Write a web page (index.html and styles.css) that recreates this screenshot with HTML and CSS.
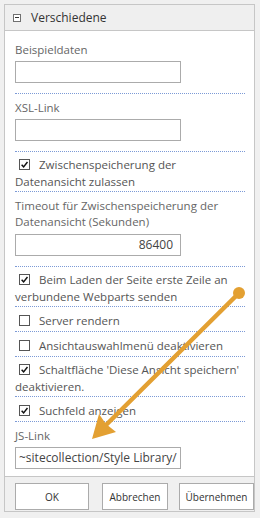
FILE: index.html
```html
<!DOCTYPE html>
<html lang="de">

    <head>
        <meta charset="UTF-8">
        <meta name="viewport" content="width=device-width, initial-scale=1.0">
        <title>Verschiedene</title>
        <link rel="stylesheet" href="styles.css">
    </head>

    <body>
        <div class="page">
            <div class="panel">
                <div class="section-head">
                    <span class="toggle"></span>
                    <span class="section-title">Verschiedene</span>
                </div>

                <div class="field first">
                    <div class="label">Beispieldaten</div>
                    <div class="textbox"></div>
                </div>

                <div class="field">
                    <div class="label">XSL-Link</div>
                    <div class="textbox"></div>
                </div>

                <div class="check-row">
                    <span class="box checked"><svg viewBox="0 0 10 10"><path d="M1.8 5.2 L4 7.6 L8.3 2.2"/></svg></span>Zwischenspeicherung der<br>Datenansicht zulassen
                </div>

                <div class="field">
                    <div class="label">Timeout für Zwischenspeicherung der<br>Datenansicht (Sekunden)</div>
                    <div class="textbox number">86400</div>
                </div>

                <div class="check-row">
                    <span class="box checked"><svg viewBox="0 0 10 10"><path d="M1.8 5.2 L4 7.6 L8.3 2.2"/></svg></span>Beim Laden der Seite erste Zeile an<br>verbundene Webparts senden
                </div>

                <div class="check-row single">
                    <span class="box"></span>Server rendern
                </div>

                <div class="check-row single">
                    <span class="box"></span>Ansichtauswahlmenü deaktivieren
                </div>

                <div class="check-row">
                    <span class="box checked"><svg viewBox="0 0 10 10"><path d="M1.8 5.2 L4 7.6 L8.3 2.2"/></svg></span>Schaltfläche 'Diese Ansicht speichern'<br>deaktivieren.
                </div>

                <div class="check-row single">
                    <span class="box checked"><svg viewBox="0 0 10 10"><path d="M1.8 5.2 L4 7.6 L8.3 2.2"/></svg></span>Suchfeld anzeigen
                </div>

                <div class="field last">
                    <div class="label">JS-Link</div>
                    <div class="textbox value">~sitecollection/Style Library/</div>
                </div>

                <div class="buttons">
                    <button class="btn btn-ok">OK</button>
                    <button class="btn btn-cancel">Abbrechen</button>
                    <button class="btn btn-apply">Übernehmen</button>
                </div>
            </div>
        </div>

        <!-- callout arrow drawn over the panel -->
        <svg class="callout" width="260" height="518" viewBox="0 0 260 518">
            <line x1="239" y1="293" x2="104" y2="427" />
            <circle cx="239" cy="293" r="6" />
            <polygon points="92,439 99,414 106,424 116,432" />
        </svg>
    </body>

</html>
```

FILE: styles.css
```css
body {
    font-family: "Open Sans", Arial, sans-serif;
    background-color: #f0f0f0;
    margin: 0;
    width: 260px;
    height: 518px;
    overflow: hidden;
}

.page {
    padding: 4px 0 0 4px;
}

.panel {
    width: 249px;
    background-color: white;
    border: 1px solid #c6c6c6;
}

.section-head {
    display: flex;
    align-items: center;
    height: 25px;
    background-color: #efefef;
    border-bottom: 1px solid #c6c6c6;
}

.toggle {
    position: relative;
    width: 6px;
    height: 6px;
    margin-left: 8px;
    border: 1px solid #707070;
    background-color: white;
}

.toggle::after {
    content: "";
    position: absolute;
    left: 1px;
    top: 2px;
    width: 4px;
    height: 1px;
    background-color: #333;
}

.section-title {
    margin-left: 10px;
    font-size: 12px;
    color: #333;
}

.field {
    margin: 0 9px 0 10px;
    padding: 6px 0 10px 0;
    border-bottom: 1px dotted #7c9ad6;
}

.field.first {
    padding-top: 11px;
}

.field.last {
    border-bottom: none;
    padding-bottom: 7px;
}

.label {
    font-size: 11.5px;
    line-height: 16px;
    color: #666;
    white-space: nowrap;
}

.textbox {
    width: 164px;
    height: 20px;
    margin-top: 3px;
    border: 1px solid #ababab;
    font-size: 12px;
    line-height: 20px;
    color: #444;
    box-sizing: content-box;
    white-space: nowrap;
    overflow: hidden;
}

.textbox.number {
    text-align: right;
    padding-right: 7px;
    width: 157px;
    margin-top: 4px;
}

.textbox.value {
    padding-left: 3px;
    width: 161px;
}

.check-row {
    margin: 0 9px 0 10px;
    padding: 4px 0 1px 0;
    font-size: 11.5px;
    line-height: 17px;
    color: #555;
    white-space: nowrap;
    border-bottom: 1px dotted #7c9ad6;
}

.check-row.single {
    padding: 5px 0 2px 0;
}

.box {
    display: inline-block;
    vertical-align: -1px;
    width: 9px;
    height: 9px;
    margin: 0 9px 0 4px;
    border: 1px solid #555;
    background-color: white;
}

.box svg {
    display: block;
    width: 9px;
    height: 9px;
}

.box svg path {
    fill: none;
    stroke: #111;
    stroke-width: 1.6;
}

.buttons {
    display: flex;
    height: 35px;
    padding-top: 6px;
    box-sizing: border-box;
    background-color: #f0f0f0;
    border-top: 1px solid #c6c6c6;
    padding-left: 10px;
}

.btn {
    flex-shrink: 0;
    height: 27px;
    padding: 0;
    background-color: white;
    border: 1px solid #ababab;
    font-family: "Open Sans", Arial, sans-serif;
    font-size: 10px;
    color: #333;
}

.btn-ok {
    width: 74px;
}

.btn-cancel {
    width: 66px;
    margin-left: 13px;
}

.btn-apply {
    width: 75px;
    margin-left: 11px;
}

.callout {
    position: absolute;
    left: 0;
    top: 0;
}

.callout line {
    stroke: #e3a032;
    stroke-width: 4.5;
    stroke-linecap: round;
}

.callout circle,
.callout polygon {
    fill: #e3a032;
}
```
